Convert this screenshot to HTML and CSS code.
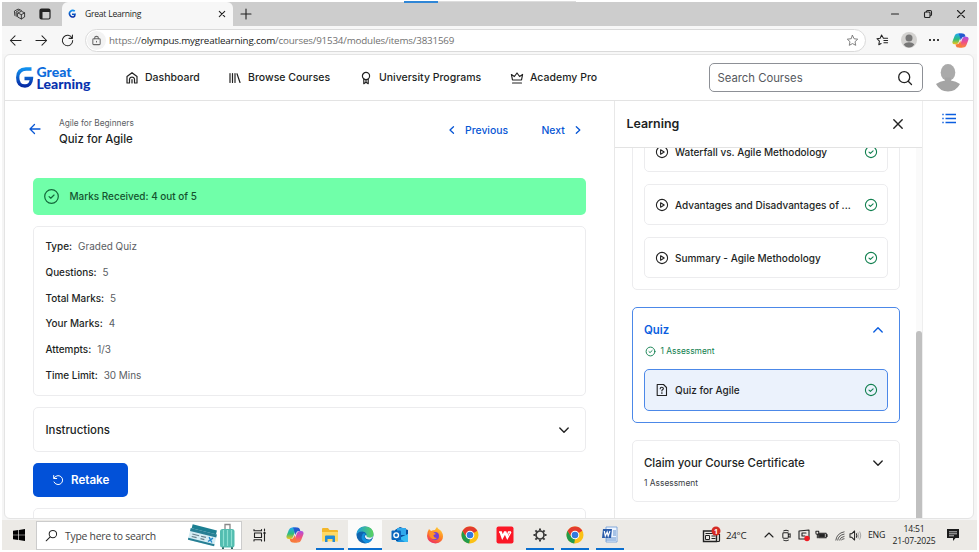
FILE: index.html
```html
<!DOCTYPE html>
<html lang="en">
<head>
<meta charset="utf-8">
<title>Great Learning</title>
<link rel="stylesheet" href="styles.css">
</head>
<body>
<svg class="defs" aria-hidden="true">
  <defs>
    <linearGradient id="brand" x1="0" y1="0" x2="0" y2="1"><stop offset="0" stop-color="#1190ee"/><stop offset="1" stop-color="#062ba5"/></linearGradient>
    <linearGradient id="cpA" x1="0" y1="0" x2="0" y2="1"><stop offset="0" stop-color="#20a8f4"/><stop offset=".55" stop-color="#2fbd7c"/><stop offset="1" stop-color="#f5c518"/></linearGradient>
    <linearGradient id="cpB" x1="0" y1="0" x2="0" y2="1"><stop offset="0" stop-color="#a94ee8"/><stop offset=".5" stop-color="#ee4f86"/><stop offset="1" stop-color="#fb8a3a"/></linearGradient>
    <linearGradient id="edgeA" x1="0" y1="0" x2="1" y2="0"><stop offset="0" stop-color="#1b9de2"/><stop offset="1" stop-color="#5bd45b"/></linearGradient>
    <linearGradient id="fx" x1=".8" y1="0" x2=".3" y2="1"><stop offset="0" stop-color="#ffd43a"/><stop offset=".5" stop-color="#ff8422"/><stop offset="1" stop-color="#ee2b63"/></linearGradient>
    <symbol id="check" viewBox="0 0 14 14"><circle cx="7" cy="7" r="5.6"/><path d="M5 7.100l1.400 1.300L9.100 5.800"/></symbol>
    <symbol id="play" viewBox="0 0 14 14"><circle cx="7" cy="7" r="5.600"/><path d="M5.600 4.800v4.400L9.200 7z"/></symbol>
    <symbol id="down" viewBox="0 0 12 12"><path d="M1.800 4L6 8.200 10.200 4"/></symbol>
    <symbol id="up" viewBox="0 0 12 12"><path d="M1.800 8L6 3.800 10.200 8"/></symbol>
    <symbol id="copilot" viewBox="0 0 18 18">
      <path d="M6 1.500h4.500L7.200 10.500Q6.300 13 4.300 13H2.800Q-.2 13 .6 9.800L2.800 4Q3.700 1.500 6 1.500z" fill="url(#cpA)"/>
      <path d="M12 16.500H7.500L10.800 7.500Q11.700 5 13.700 5h1.500q3 0 2.200 3.200L15.200 14Q14.300 16.500 12 16.500z" fill="url(#cpB)"/>
      <path d="M6.500 1.500h5q1.800 0 2.300 1.800l.5 1.700h-1.500q-2 0-2.800 2.200L9.200 9 8 4Q7.500 1.500 6.500 1.500z" fill="#2458cf"/>
      <path d="M11.500 16.500h-5q-1.800 0-2.300-1.800L3.700 13h1.500q2 0 2.800-2.200L8.800 9l1.200 5q.5 2.500 1.500 2.500z" fill="#f7793c"/>
    </symbol>
    <symbol id="chrome" viewBox="0 0 18 18">
      <circle cx="9" cy="9" r="8.500" fill="#fbc116"/>
      <path d="M1.600 4.800L5.500 11 9 13l-.8 4.500A8.500 8.500 0 0 1 1.600 4.800z" fill="#229b4b"/>
      <path d="M1.600 4.800A8.500 8.500 0 0 1 16.400 4.800L9 9H4z" fill="#e33b2e"/>
      <circle cx="9" cy="9" r="4.300" fill="#fff"/><circle cx="9" cy="9" r="3.300" fill="#3379df"/>
    </symbol>
  </defs>
</svg>
<div class="screen">
  <div class="tabs">
    <svg class="workspaces ln" viewBox="0 0 14 14"><path d="M5 5.500l4-2 3.500 1.700v4.500L9 11.800 5.500 10zM5.500 5.500L9 7.200l3.500-2M9 7.200v4.500M3.500 9L3.300 4.300 7.500 2l1.500.6M2 8L1.500 3.300 5.500 1.200l1.500.5"/></svg>
    <svg class="vtabs" viewBox="0 0 12 12"><rect x="1" y="1" width="10" height="10" rx="1.500" fill="none" stroke="#222" stroke-width="1.200"/><path d="M1 1h10v3H1zM1 4h2.500v7H1z" fill="#222"/></svg>
    <div class="tab">
      <svg class="fav" viewBox="0 0 10 10"><path d="M7.800 2.200A3.200 3.200 0 1 0 7.500 7.300L8 5.200H5" fill="none" stroke="url(#brand)" stroke-width="1.600"/></svg>
      <span>Great Learning</span>
      <svg class="tabx ln" viewBox="0 0 8 8"><path d="M1.300 1.300l5.400 5.400M6.700 1.300L1.300 6.700"/></svg>
    </div>
    <svg class="newtab ln" viewBox="0 0 12 12"><path d="M6 1v10M1 6h10"/></svg>
    <div class="winctl">
      <svg class="ln" viewBox="0 0 10 10"><path d="M1.500 5h7"/></svg>
      <svg class="ln" viewBox="0 0 10 10"><rect x="1.500" y="3" width="5.500" height="5.500" rx="1"/><path d="M3.500 2.800V2.500Q3.500 1.500 4.500 1.500h2.700Q8.500 1.500 8.500 2.800v2.700q0 1-1 1"/></svg>
      <svg class="ln" viewBox="0 0 10 10"><path d="M1.500 1.500l7 7M8.500 1.500l-7 7"/></svg>
    </div>
    <div class="peek"><i></i></div>
  </div>
  <div class="toolbar">
    <svg class="nav ln" viewBox="0 0 14 14"><path d="M13 7H1.500M6.500 2l-5 5 5 5"/></svg>
    <svg class="nav ln" viewBox="0 0 14 14"><path d="M1 7h11.500M7.500 2l5 5-5 5"/></svg>
    <svg class="nav ln" viewBox="0 0 14 14"><path d="M12 4.500A5.600 5.600 0 1 0 12.600 7M12.300 1v3.700H8.600"/></svg>
    <div class="url">
      <span class="lock"><svg class="ln" viewBox="0 0 12 12"><rect x="2" y="4" width="8" height="6.500" rx="1"/><path d="M4 4V3q0-1.500 2-1.500T8 3v1M6 6.700v1"/></svg></span>
      <span class="addr">https://<b>olympus.mygreatlearning.com</b>/courses/91534/modules/items/3831569</span>
      <svg class="star ln" viewBox="0 0 14 14"><path d="M7 1.500l1.700 3.600 3.900.5-2.900 2.700.8 3.900L7 10.300l-3.500 1.900.8-3.900L1.400 5.600l3.900-.5z"/></svg>
    </div>
    <svg class="favs ln" viewBox="0 0 14 14"><path d="M8 4.500L6 1 4.500 4.500l-3.500.5 2.700 2.700L3 11.500l2.500-1.300M8 4.500h4.500M8.500 7h4M8.500 9.500h4"/></svg>
    <svg class="prof" viewBox="0 0 16 16"><circle cx="8" cy="8" r="8" fill="#d3d2d0"/><circle cx="8" cy="6" r="3.500" fill="#777"/><path d="M2.700 12.200q2-2 5.300-2t5.300 2Q11.500 15.500 8 15.500t-5.300-3.300z" fill="#777"/></svg>
    <svg class="dots" viewBox="0 0 12 4"><circle cx="2" cy="2" r="1"/><circle cx="6" cy="2" r="1"/><circle cx="10" cy="2" r="1"/></svg>
    <svg class="cop"><use href="#copilot"/></svg>
  </div>

  <div class="page">
    <header>
      <div class="logo">
        <svg viewBox="0 0 18 22"><path d="M15.500 2H10Q1.700 2.500 1.700 10.500q0 8.500 7.300 8.500 6 0 6.500-7.500H8.500" fill="none" stroke="url(#brand)" stroke-width="3.300"/></svg>
        <div><b>Great</b><b>Learning</b></div>
      </div>
      <a class="n1"><svg class="ln" viewBox="0 0 14 14"><path d="M2 5.500L7 1.700l5 3.800V12H9.500V8Q9 6.200 7 6.200T4.500 8v4H2zM7 8.500V12"/></svg><span>Dashboard</span></a>
      <a class="n2"><svg class="ln" viewBox="0 0 14 14"><path d="M2 2.500v9M4.500 2.500v9M7 2.500v9M9 2.800l3 8.700"/></svg><span>Browse Courses</span></a>
      <a class="n3"><svg class="ln" viewBox="0 0 14 14"><circle cx="7" cy="5" r="3.600"/><path d="M4.800 8v4.700L7 11.300l2.200 1.400V8M7 8.500v3"/></svg><span>University Programs</span></a>
      <a class="n4"><svg class="ln" viewBox="0 0 14 14"><path d="M2.500 9L1.400 3.500l3 2L7 2l2.600 3.500 3-2L11.500 9zM2.500 12h9"/></svg><span>Academy Pro</span></a>
      <div class="search"><span>Search Courses</span><svg class="ln" viewBox="0 0 16 16"><circle cx="7.200" cy="7.200" r="5.500"/><path d="M11.200 11.200l3.300 3.300"/></svg></div>
      <svg class="avatar" viewBox="0 0 26 28"><ellipse cx="13" cy="8.500" rx="7.300" ry="8.500" fill="#aaa"/><path d="M1 20q4-3 9-3.500v-3h6v3q5 .5 9 3.500-4 7.500-12 7.500T1 20z" fill="#a4a4a4"/></svg>
    </header>
    <div class="body">
      <main>
        <div class="crumb">
          <svg class="back ln" viewBox="0 0 12 12"><path d="M11 6H1.200M5.500 1.500L1 6l4.500 4.500"/></svg>
          <div class="titles"><small>Agile for Beginners</small><h1>Quiz for Agile</h1></div>
          <a class="prev"><svg class="ln" viewBox="0 0 8 10"><path d="M5.500 1.700L2 5l3.500 3.300"/></svg><span>Previous</span></a>
          <a class="next"><span>Next</span><svg class="ln" viewBox="0 0 8 10"><path d="M2.300 1.700L5.800 5 2.300 8.300"/></svg></a>
        </div>
        <div class="banner"><svg class="ln"><use href="#check"/></svg><span>Marks Received: 4 out of 5</span></div>
        <dl class="card">
          <div><dt>Type:</dt><dd>Graded Quiz</dd></div>
          <div><dt>Questions:</dt><dd>5</dd></div>
          <div><dt>Total Marks:</dt><dd>5</dd></div>
          <div><dt>Your Marks:</dt><dd>4</dd></div>
          <div><dt>Attempts:</dt><dd>1/3</dd></div>
          <div><dt>Time Limit:</dt><dd>30 Mins</dd></div>
        </dl>
        <div class="card instr"><span>Instructions</span><svg class="ln chev"><use href="#down"/></svg></div>
        <button><svg class="ln" viewBox="0 0 12 12"><path d="M1.700 1.500v3h3M2 4.200A4.500 4.500 0 1 1 2 8"/></svg><span>Retake</span></button>
        <div class="card stub"></div>
      </main>
      <aside>
        <div class="lhead"><h2>Learning</h2><svg class="ln" viewBox="0 0 12 12"><path d="M1.800 1.800l8.400 8.400M10.200 1.800l-8.400 8.400"/></svg></div>
        <div class="scroll">
          <div class="list">
            <section class="lessons">
              <div class="item"><svg class="ln"><use href="#play"/></svg><span>Waterfall vs. Agile Methodology</span><svg class="ln ok"><use href="#check"/></svg></div>
              <div class="item"><svg class="ln"><use href="#play"/></svg><span>Advantages and Disadvantages of ...</span><svg class="ln ok"><use href="#check"/></svg></div>
              <div class="item"><svg class="ln"><use href="#play"/></svg><span>Summary - Agile Methodology</span><svg class="ln ok"><use href="#check"/></svg></div>
            </section>
            <section class="quiz">
              <div class="sh"><h3>Quiz</h3><svg class="ln chev"><use href="#up"/></svg></div>
              <p class="done"><svg class="ln"><use href="#check"/></svg>1 Assessment</p>
              <div class="item sel"><svg class="ln" viewBox="0 0 14 14"><path d="M2.200 1.500h6.300l3 3v8H2.200z"/><path d="M5.200 5.700q0-1.500 1.600-1.500t1.600 1.400q0 1-1.500 1.600v.7M6.900 9.600v.8"/></svg><span>Quiz for Agile</span><svg class="ln ok"><use href="#check"/></svg></div>
            </section>
            <section class="claim">
              <div class="sh"><h3>Claim your Course Certificate</h3><svg class="ln chev"><use href="#down"/></svg></div>
              <p>1 Assessment</p>
            </section>
          </div>
          <div class="track"><i></i></div>
        </div>
      </aside>
      <nav class="rail"><svg viewBox="0 0 14 11"><path d="M3.500 1.500H14M3.500 5.500H14M3.500 9.500H14M.3 1.500h1.400M.3 5.500h1.400M.3 9.500h1.400" stroke="#0b5ee0" stroke-width="1.300"/></svg></nav>
    </div>
  </div>

  <div class="taskbar">
    <div class="start"><svg viewBox="0 0 12 12"><path d="M0 1.700L5.300 1v4.700H0zM6 .9L12 0v5.700H6zM0 6.300h5.300V11L0 10.300zM6 6.300h6V12l-6-.9z"/></svg></div>
    <div class="tsearch">
      <svg class="mag ln" viewBox="0 0 14 14"><circle cx="8.500" cy="5.500" r="4"/><path d="M5.600 8.400L1.300 12.700"/></svg>
      <span>Type here to search</span>
      <svg class="trip" viewBox="0 0 48 26">
        <g transform="rotate(14 3 4)"><rect x="4" y="1" width="25" height="8" fill="#1c7f92"/><rect x="3" y="5" width="27" height="12" fill="#d5edf4"/><path d="M3 5h27v3H3zM3 15h27v2H3z" fill="#277f94"/><path d="M6 10.500h7M6 13h5M15 10.500h5M15 13h4" stroke="#69818b" stroke-width="1.200"/><path d="M23 9.500l4 4.500M27 9.500L23 14" stroke="#2288cc" stroke-width="1.400"/></g>
        <path d="M37 7V1.500h5V7" fill="none" stroke="#888" stroke-width="1.300"/><rect x="32" y="6" width="14.500" height="18.500" rx="2.500" fill="#53bdb0"/><path d="M35.500 7v16M39.500 7v16M43.500 7v16" stroke="#8ee0d2" stroke-width="1.200"/><path d="M34 24.300h2V26h-2zM43 24.300h2V26h-2z" fill="#2c6c68"/>
      </svg>
    </div>
    <div class="apps">
      <span class="view"><svg class="ln tv" viewBox="0 0 14 14"><path d="M1 1.500v1.200h7.500V1.500M1.500 5h7v4.500h-7zM1 13v-1.300h7.500V13M11.500 1v2M11.500 5v8"/><path d="M10.500 4h2v2h-2z" fill="#222" stroke="none"/></svg></span>
      <span><svg><use href="#copilot"/></svg></span>
      <span class="on"><svg viewBox="0 0 18 18"><path d="M1 3q0-1 1-1h5l1.500 2H16q1 0 1 1v10H1z" fill="#f3b72a"/><path d="M1 6h16v9.500H1z" fill="#ffd965"/><path d="M4 16V10.500q0-1 1-1h8q1 0 1 1V16h-2.500v-3h-5v3z" fill="#238bd6"/></svg></span>
      <span class="on active"><svg viewBox="0 0 18 18"><circle cx="9" cy="9" r="8.500" fill="#0f64ae"/><path d="M.6 8Q1.500.5 9 .5q8 .2 8.500 7.500 0 4-4.500 4-3 0-2.800-2 .7-.8.300-1.800Q9.500 5.500 6.500 5.500.6 5.500.6 10z" fill="url(#edgeA)"/><path d="M6.500 8.300Q3.500 14 10 17.300q4-.3 6-3.700-6 2-7.500-2-.6-2 1.200-3.700Q7.500 6.500 6.500 8.300z" fill="#1490df"/><path d="M10.500 8.800q-1 2.200 2.600 2.800 2.600.3 4-1.300-.5 2.700-3 3.200-4 .5-5.200-2.500Q8.700 9.200 10.500 8.800z" fill="#eef5fa"/></svg></span>
      <span><svg viewBox="0 0 18 18"><path d="M4 4l5-3 8 3v11H5z" fill="#0a4f9e"/><path d="M6 2h9v7H6z" fill="#31a9ec"/><path d="M5 16l12-8v7q0 1-1 1z" fill="#1a91df"/><path d="M17 8v7q0 1-1 1h-2L8 12z" fill="#39bdf2"/><rect x=".5" y="4.500" width="9.500" height="9.500" rx="1" fill="#0b66be"/><circle cx="5.200" cy="9.200" r="2.300" fill="none" stroke="#fff" stroke-width="1.400"/></svg></span>
      <span><svg viewBox="0 0 18 18"><path d="M3 3l2 2q2-1 4-1 1-2 2-3 1 2 3 3 3 2.500 3 6.500 0 6-7.500 7Q1.500 17 1 10 1 6 3 3z" fill="url(#fx)"/><circle cx="9" cy="10" r="4" fill="#7440d8"/><path d="M3 6q3-1 5 .5L10 8 7.500 9Q7.500 12 11 12q-3 2.500-6 0Q3 10 3 6z" fill="#ff9128"/></svg></span>
      <span><svg><use href="#chrome"/></svg></span>
      <span><svg viewBox="0 0 18 18"><rect x=".5" y=".5" width="17" height="17" rx="2" fill="#fb1726"/><path d="M3 6h2.300l1.400 4L8.500 6h1.300l1.400 4L12.500 6H15M4 6l2.300 6.500L9 7.500l2.300 5L15 6" fill="none" stroke="#fff" stroke-width="1.300"/></svg></span>
      <span class="on"><svg viewBox="0 0 18 18"><circle cx="9" cy="9" r="4" fill="none" stroke="#3a3a3a" stroke-width="1.700"/><g stroke="#3a3a3a" stroke-width="2"><path d="M9 2.500v2M9 13.500v2M2.500 9h2M13.500 9h2M4.400 4.400l1.500 1.500M12.100 12.100l1.500 1.500M4.400 13.600l1.500-1.500M12.100 5.900l1.500-1.500"/></g></svg></span>
      <span class="on"><svg><use href="#chrome"/></svg></span>
      <span class="on"><svg viewBox="0 0 18 18"><path d="M5 1h11v15H5z" fill="#eef5ff" stroke="#6a9bd5" stroke-width=".8"/><path d="M12 5h3M12 7h3M12 9h3M5 12h10M5 14h10" stroke="#5f8fcd"/><path d="M2 3h9l-1 9H1z" fill="#2a5caa"/><path d="M3.300 5l1 5L6.200 6l1 4L9 5" fill="none" stroke="#fff" stroke-width="1.200"/></svg></span>
    </div>
    <div class="tray">
      <svg class="news" viewBox="0 0 20 18"><path d="M1.500 5h13v10.500h-13z" fill="none" stroke="#222" stroke-width="1.400"/><path d="M14.500 8.500h3v6q0 1-1 1h-3M3.500 7.500h9M9.500 10h4M9.500 12.500h4" fill="none" stroke="#222" stroke-width="1.200"/><path d="M3.500 9.500h4v4h-4z" fill="none" stroke="#222"/><circle cx="14" cy="5" r="4.500" fill="#d52b24"/><text x="14" y="7.500">1</text></svg>
      <span class="temp">24°C</span>
      <svg class="caret ln" viewBox="0 0 10 10"><path d="M1 7l4-4 4 4"/></svg>
      <svg class="ti ln" viewBox="0 0 12 14"><rect x="2" y="4" width="6" height="6" rx="1"/><path d="M8 6l2-1v4L8 8M3 2q2.500-1.300 5 0M3 12q2.500 1.300 5 0"/></svg>
      <svg class="ti2 ln" viewBox="0 0 14 14"><path d="M2 3l10-1v9H2zM5 8V5h4M5 8h3"/><circle cx="10" cy="10.500" r="2.700" fill="#ee1c24" stroke="none"/></svg>
      <svg class="ti3 ln" viewBox="0 0 14 12"><path d="M4 4h8v5H4zM13 5.500v2M1 2v2q0 1.200 1.500 1.200T4 4V2zM2.500 5v4"/><path d="M5 5h5v3H5z" fill="#222"/></svg>
      <svg class="ti4 ln" viewBox="0 0 12 12"><path d="M2 11q1-7.500 9-9M4 11q1-5.500 7-6.500M6 11q1-3.500 5-4M8 11q.5-1.500 3-1.500"/></svg>
      <svg class="ti5 ln" viewBox="0 0 14 12"><path d="M1 4h2l3-3v10L3 8H1zM8 4q1 2 0 4"/><path d="M9.700 3q1.700 3 0 6M11.500 2q2.300 4 0 8" stroke="#aaa"/></svg>
      <span class="eng">ENG</span>
      <div class="clock"><span>14:51</span><span>21-07-2025</span></div>
      <svg class="notif" viewBox="0 0 12 12"><path d="M0 0h12v9H8.500L6 12V9H0z" fill="#1b1b1b"/><path d="M2 2.800h8M2 4.800h8M2 6.800h5" stroke="#eee" stroke-width=".8"/></svg>
    </div>
  </div>
</div>
</body>
</html>
```
FILE: styles.css
```css
* { box-sizing: border-box; margin: 0; padding: 0; }
html, body { width: 979px; height: 552px; overflow: hidden; background: #fff; }
body { font-family: Inter, "Liberation Sans", sans-serif; color: #1d1f24; }
.defs { position: absolute; width: 0; height: 0; }
svg { display: block; flex: none; width: 14px; height: 14px; }
span, a, b, small, h1, h2, h3, p, dt, dd { white-space: nowrap; }
.ln { fill: none; stroke: #222; stroke-width: 1.1; stroke-linecap: round; stroke-linejoin: round; }
.screen { width: 975px; height: 548px; margin: 2px; background: #f5f5f5; display: flex; flex-direction: column; }

.tabs { height: 24px; background: #cdcdcd; display: flex; align-items: center; position: relative; font-family: "Open Sans", sans-serif; }
.workspaces { width: 13px; height: 13px; margin-left: 11px; stroke-width: .9; }
.vtabs { width: 12px; height: 12px; margin-left: 13px; }
.tab { width: 171px; height: 24px; margin-left: 11px; background: #f7f7f7; border-radius: 6px 6px 0 0; display: flex; align-items: center; font-size: 8.6px; }
.fav { width: 10px; height: 10px; margin-left: 5px; }
.tab span { margin-left: 8px; letter-spacing: -.25px; flex: 1; }
.tabx { width: 8px; height: 8px; margin-right: 7px; }
.newtab { width: 12px; height: 12px; margin-left: 7px; }
.winctl { margin-left: auto; margin-right: 11px; display: flex; gap: 23px; }
.winctl svg { width: 10px; height: 10px; }
.peek { position: absolute; left: 402px; top: -1px; width: 172px; height: 1px; background: #ddd; }
.peek i { display: block; width: 34px; height: 2px; background: #2f86d6; }

.toolbar { height: 28px; background: #f7f7f7; display: flex; align-items: center; padding-left: 7px; }
.nav { width: 13px; height: 13px; margin-right: 13px; }
.url { width: 781px; height: 23px; margin-left: -2px; border: 1px solid #dadada; border-radius: 12px; background: #fff; display: flex; align-items: center; }
.lock { width: 19px; height: 19px; border-radius: 50%; background: #f3f3f3; display: grid; place-items: center; margin-left: 1px; }
.lock svg { width: 11px; height: 11px; }
.lock .ln { stroke: #666; }
.addr { font-family: "Open Sans", sans-serif; font-size: 9.8px; color: #707070; margin-left: 3px; flex: 1; letter-spacing: -.175px; }
.addr b { font-weight: 400; color: #1a1a1a; }
.star { width: 13px; height: 13px; margin-right: 6.5px; stroke: #777; stroke-width: 1; }
.favs { width: 13px; height: 13px; margin-left: 10px; }
.prof { width: 16px; height: 16px; margin-left: 11.5px; }
.dots { width: 12px; height: 4px; margin-left: 11.5px; }
.cop { width: 17px; height: 17px; margin-left: 12px; }

.page { width: 970px; height: 465px; margin-left: 2px; background: #fff; border: 1px solid #e4e4e4; border-radius: 6px; overflow: hidden; display: flex; flex-direction: column; }
header { height: 46px; flex: none; border-bottom: 1px solid #e3e3e3; display: flex; align-items: center; font-weight: 500; font-size: 10.5px; }
.logo { display: flex; margin-left: 10.5px; width: 109.500px; flex: none; align-items: center; gap: 3px; }
.logo svg { width: 18px; height: 22px; }
.logo b { display: block; font: 900 14px/12px Lato, sans-serif; color: #0d6cdc; }
.logo b + b { color: #0832ae; }
header a { display: flex; align-items: center; gap: 6px; flex: none; }
header a .ln { stroke-width: 1.2; }
.n1 { width: 103px; }
.n2 { width: 131px; }
.n3 { width: 151px; }
.n4 { width: 198.5px; }
.search { width: 214px; flex: none; height: 29px; border: 1px solid #8d9096; border-radius: 5px; display: flex; align-items: center; justify-content: space-between; padding: 0 9px 0 8px; font-weight: 400; font-size: 11.3px; color: #55585e; }
.search .ln { width: 16px; height: 16px; stroke-width: 1.3; }
.avatar { width: 26px; height: 28px; margin-left: 12.5px; }

.body { flex: 1; min-height: 0; display: flex; }
main { width: 609px; padding: 0 28px; overflow: hidden; }
.crumb { display: flex; height: 77px; padding-top: 15px; align-items: flex-start; color: #0756d5; font-size: 10.4px; font-weight: 500; }
.back { width: 12px; height: 12px; margin: 7px 0 0 -4px; stroke: #0756d5; stroke-width: 1.3; }
.titles { margin-left: 18px; width: 388.5px; flex: none; color: #1d1f24; }
.titles small { display: block; font-size: 8.3px; line-height: 14px; font-weight: 400; color: #5c5f65; }
.titles h1 { font-size: 11.4px; line-height: 19px; font-weight: 500; }
.crumb a { display: flex; align-items: center; height: 28px; gap: 9.5px; }
.crumb a .ln { width: 8px; height: 10px; stroke: #0756d5; stroke-width: 1.3; }
.prev { width: 94px; }
.banner { width: 553px; height: 37px; border-radius: 5px; background: #70ffa9; display: flex; align-items: center; padding: 0 0 1px 10px; gap: 9.5px; font-size: 9.95px; color: #14532f; font-weight: 500; }
.banner .ln { width: 17px; height: 17px; stroke: #146a3c; stroke-width: 1; }
.card { width: 553px; border: 1px solid #ececee; border-radius: 5px; }
dl { margin-top: 11px; height: 170px; padding: 6.5px 11.500px; font-size: 9.950px; }
dl div { display: flex; height: 25.7px; align-items: center; gap: 6px; }
dt { font-weight: 500; }
dd { color: #5a5d63; }
.instr { margin-top: 11px; height: 45px; display: flex; align-items: center; justify-content: space-between; padding: 0 15px 0 11.5px; font-size: 11.4px; font-weight: 500; }
.chev { width: 12px; height: 12px; stroke-width: 1.4; }
button { display: flex; align-items: center; margin-top: 11px; width: 95px; height: 34px; border: 0; border-radius: 5px; background: #0251d8; color: #fff; font: 600 11.6px Inter, sans-serif; padding-left: 19px; gap: 7px; }
button .ln { width: 12px; height: 12px; stroke: #fff; stroke-width: 1; }
.stub { margin-top: 11px; height: 30px; }

aside { width: 309px; border-left: 1px solid #e8e8e8; border-right: 1px solid #eee; display: flex; flex-direction: column; }
.lhead { height: 47px; flex: none; border-bottom: 1px solid #e3e3e3; display: flex; align-items: center; justify-content: space-between; padding: 0 18px 1px 11.5px; }
.lhead h2 { font-size: 12.4px; font-weight: 600; }
.lhead .ln { width: 12px; height: 12px; stroke-width: 1.4; }
.scroll { flex: 1; min-height: 0; display: flex; }
.list { width: 302px; padding-left: 17px; overflow: hidden; }
section { width: 268px; border: 1px solid #ececee; border-radius: 5px; padding: 0 11px; margin-bottom: 17px; }
.lessons { height: 160px; margin-top: -18px; }
.item { height: 41px; border: 1px solid #ececee; border-radius: 5px; display: flex; align-items: center; padding: 0 9.5px; font-size: 10px; font-weight: 500; margin-bottom: 12px; }
.item span { flex: 1; margin-left: 6.5px; }
.ln.ok { stroke: #128050; }
.quiz { height: 116px; border-color: #4c88e8; }
.sh { display: flex; justify-content: space-between; align-items: center; padding-right: 4px; }
h3 { font-size: 11.4px; font-weight: 500; }
.quiz .sh { margin-top: 14px; height: 15px; color: #0b5ee0; }
.quiz h3 { font-weight: 600; }
.quiz .chev { stroke: #0b5ee0; }
section p { font-size: 8.4px; line-height: 14px; color: #3c3f45; }
p.done { color: #128050; display: flex; align-items: center; gap: 4.5px; margin: 7px 0 11px 1px; }
.done .ln { width: 11px; height: 11px; stroke: #128050; stroke-width: 1.2; }
.sel { height: 42px; background: #ebf2fc; border-color: #4c88e8; }
.claim { height: 62px; }
.claim .sh { margin-top: 13px; height: 17px; }
.claim p { margin-top: 5px; }
.track { width: 6px; background: #fafafa; padding-top: 183px; }
.track i { display: block; height: 189px; background: #c0c0c0; border-radius: 3px; }
.rail svg { width: 14px; height: 11px; margin: 12px 0 0 19px; }

.taskbar { height: 30px; margin-top: auto; background: #eceae6; display: flex; font-family: "Open Sans", sans-serif; }
.start { width: 34px; flex: none; display: flex; align-items: center; justify-content: center; }
.start svg { width: 12px; height: 12px; }
.tsearch { width: 206px; flex: none; height: 29px; margin-top: 1px; border: 1px solid #ccc; background: #fff; display: flex; align-items: center; font-size: 10.4px; color: #444; }
.mag { width: 13px; height: 13px; margin-left: 8px; }
.tsearch span { margin-left: 7px; flex: 1; letter-spacing: -.25px; }
.trip { width: 48px; height: 26px; margin-right: 5px; }
.apps { display: flex; flex: none; gap: 1px; }
.apps span { width: 34px; height: 30px; display: flex; align-items: center; justify-content: center; }
.apps svg { width: 18px; height: 18px; }
.apps .view { width: 35px; }
.apps .tv { width: 14px; height: 14px; }
.on { background: linear-gradient(#0b6fcf, #0b6fcf) center bottom / 28px 2px no-repeat; }
.active { background-color: #fbfbfa; background-size: 34px 2px; }
.tray { flex: 1; display: flex; align-items: center; font-size: 8.8px; color: #222; }
.news { width: 20px; height: 18px; margin-left: 75px; }
.news text { font: 700 7px "Open Sans", sans-serif; fill: #fff; text-anchor: middle; }
.temp { margin-left: 4px; width: 38px; flex: none; font-size: 9.8px; letter-spacing: -.3px; }
.caret { width: 10px; height: 10px; }
.ti { width: 11px; height: 13px; margin-left: 7px; }
.ti2 { width: 14px; height: 14px; margin-left: 5px; }
.ti3 { width: 13px; height: 12px; margin-left: 4px; }
.ti4 { width: 11px; height: 11px; margin-left: 6px; stroke-width: .8; }
.ti5 { width: 13px; height: 11px; margin-left: 4px; }
.eng { margin-left: 6px; width: 23px; flex: none; letter-spacing: -.3px; }
.clock { width: 46px; flex: none; display: flex; flex-direction: column; align-items: center; line-height: 12.5px; font-size: 8.6px; letter-spacing: -.2px; }
.notif { width: 12px; height: 12px; margin-left: 10px; }
```
